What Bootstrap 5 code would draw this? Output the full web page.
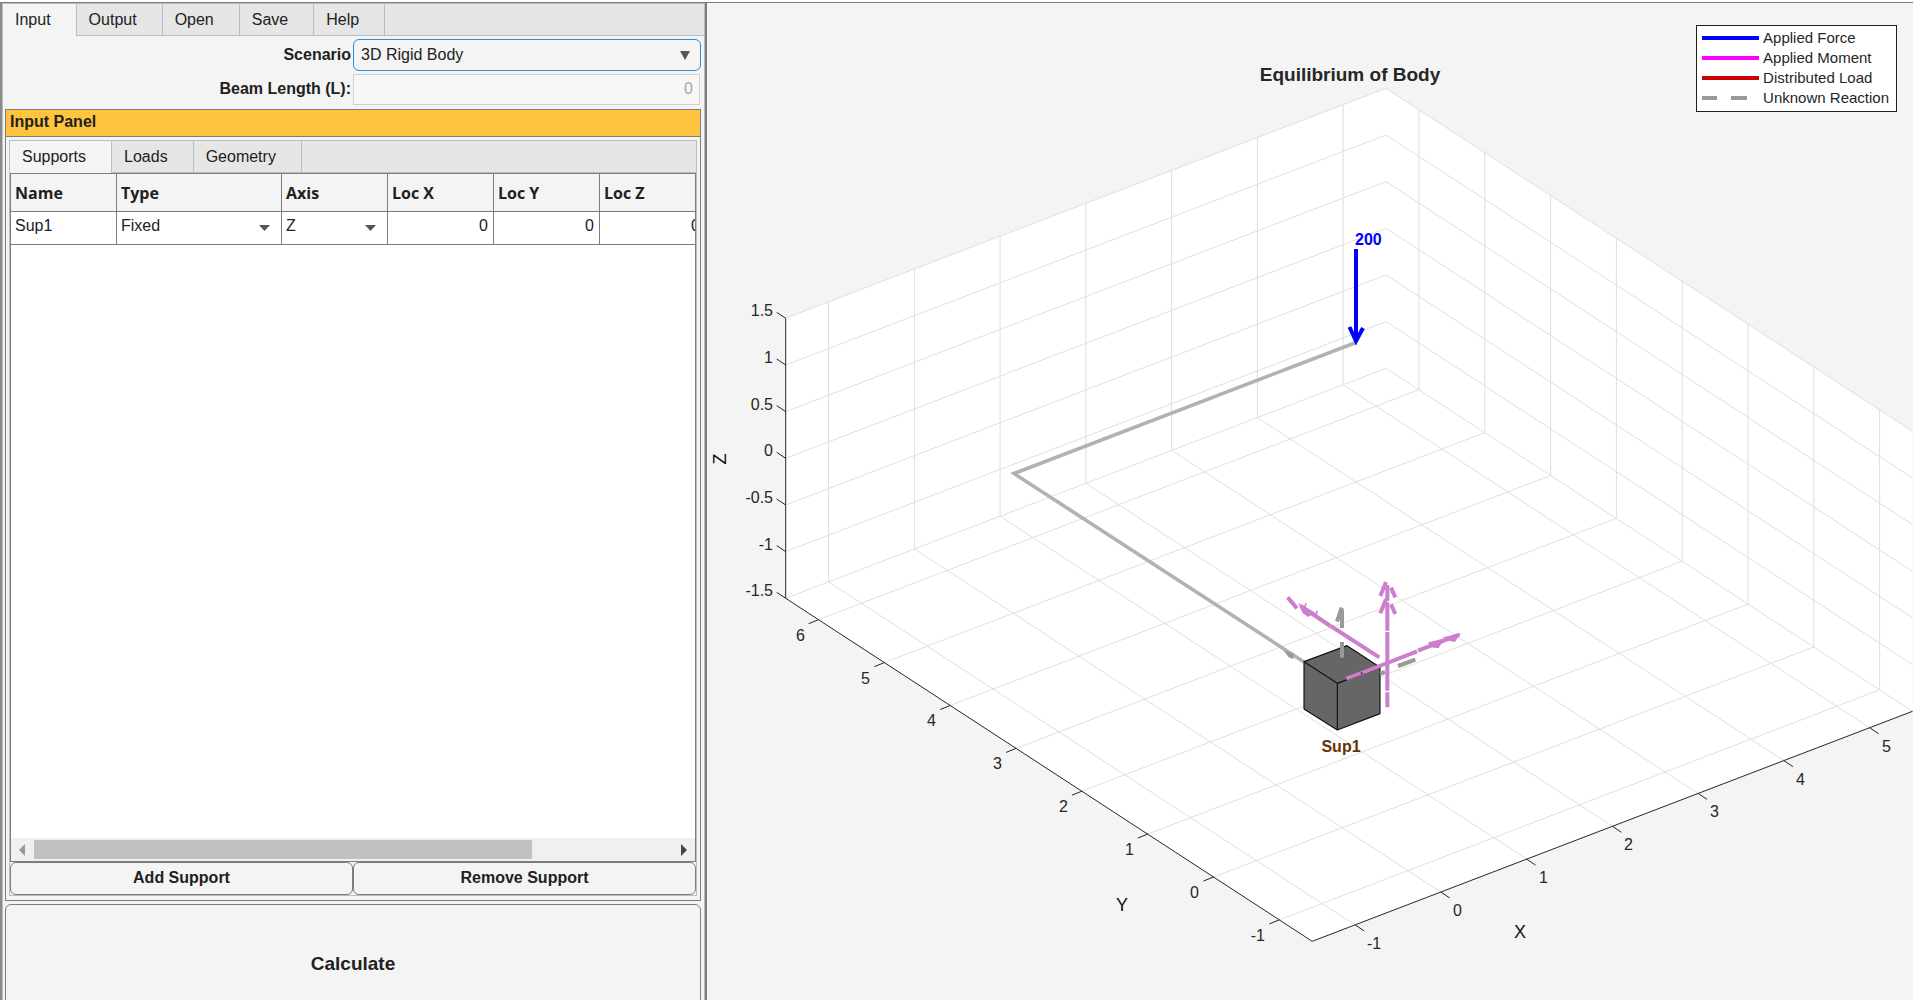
<!DOCTYPE html>
<html lang="en">
<head>
<meta charset="utf-8">
<meta name="viewport" content="width=device-width, initial-scale=1">
<title>Equilibrium of Body</title>
<link href="https://cdn.jsdelivr.net/npm/bootstrap@5.3.0/dist/css/bootstrap.min.css" rel="stylesheet">
<style>
  body { font-family: "Liberation Sans", Arial, sans-serif; font-size: 16px; line-height: 20px; color: #212121; background: #f4f4f4; }
  .app { height: 100vh; border-top: 1px solid #7d7d7d; box-shadow: 0 -2px #fff; margin-top: 2px; }
  .side { flex: 0 0 707px; min-width: 0; border-left: 2px solid #8a8a8a; border-right: 2px solid #7d7d7d; }
  .side-inner { border: 1px solid #bdbdbd; border-bottom: 0; }
  .tabstrip { background: #e6e6e6; height: 32px; box-shadow: inset 0 -1px #bdbdbd; }
  .tabstrip button { border: 0; border-right: 1px solid #bdbdbd; background: transparent; color: #212121; padding: 0 25px 0 12px; }
  .tabstrip button.active { background: #f4f4f4; }
  .form-area { padding: 3px 3px 0 2px; }
  .fld { height: 32px; width: 50%; }
  .fld-len { height: 31px; margin-top: 3px; }
  .scn { border: 1px solid #2a8ddb; border-radius: 6px; }
  .scn select, .cell-pick select { appearance: none; border: 0; background: transparent; color: #212121; outline: 0; padding: 0; }
  .scn select { padding-left: 7px; }
  .scn svg { margin-right: 10px; }
  .len { border: 1px solid #d0d0d0; background: #f7f7f7; color: #a6a6a6; text-align: right; padding: 0 6px 2px; margin-right: 1px; }
  .fld-label { width: 50%; padding-right: 2px; padding-bottom: 1px; }
  .inp-panel { border: 1px solid #7d7d7d; margin: 4px 3px 0 2px; }
  .inp-title { background: #ffc43d; border-bottom: 1px solid #7d7d7d; height: 27px; font-size: 16px; line-height: 24px; padding-left: 4px; margin: 0; }
  .inner { margin: 3px 3px 4px 3px; border: 1px solid #bdbdbd; }
  .grid-box { border: 1px solid #7d7d7d; background: #fff; overflow: hidden; height: 689px; }
  .grid-tbl { table-layout: fixed; width: 695px; border-collapse: separate; border-spacing: 0; }
  .grid-tbl th { height: 38px; background: #f4f4f4; font-family: "Open Sans", "Noto Sans", sans-serif; font-weight: 700; padding: 0 0 0 4px; border-right: 1px solid #7d7d7d; border-bottom: 1px solid #7d7d7d; }
  .grid-tbl td { height: 33px; vertical-align: top; padding: 4px 5px 0 4px; border-right: 1px solid #7d7d7d; border-bottom: 1px solid #7d7d7d; }
  .grid-tbl td.num { text-align: right; }
  .cell-pick svg { margin: 3px 6px 0 0; }
  .hbar { height: 23px; background: #f0f0f0; padding: 2px 8px; }
  .thumb { height: 19px; background: #c1c1c1; width: 498px; margin-left: 9px; }
  .act { border: 1px solid #7d7d7d; border-radius: 6px; background: #f4f4f4; font-weight: 700; color: #212121; }
  .act-sm { height: 33px; padding-bottom: 2px; }
  .act-lg { height: 120px; font-size: 19px; margin: 3px 3px 0 2px; }
  .plot-svg text { font-size: 16px; fill: #262626; }
  .plot-svg .axl { font-size: 18px; fill: #111; }
  .plot-svg .ttl { font-size: 19px; font-weight: 700; }
  .key { top: 22px; right: 16px; background: #fff; border: 1px solid #1f1f1f; padding: 2px 7px 3px 5px; font-size: 15px; color: #262626; }
</style>
<script src="https://cdn.jsdelivr.net/npm/bootstrap@5.3.0/dist/js/bootstrap.bundle.min.js"></script>
</head>
<body class="overflow-hidden">
<div class="app d-flex overflow-hidden">
  <aside class="side">
    <div class="side-inner d-flex flex-column">
      <nav class="tabstrip d-flex" aria-label="Main">
        <button type="button" class="active">Input</button><button type="button">Output</button><button type="button">Open</button><button type="button">Save</button><button type="button">Help</button>
      </nav>
      <form class="form-area">
        <div class="d-flex align-items-center">
          <label class="fld-label text-end fw-bold" for="scenario">Scenario</label>
          <div class="fld scn d-flex align-items-center">
            <select id="scenario" class="flex-fill"><option>3D Rigid Body</option></select>
            <svg width="10" height="9" aria-hidden="true"><path d="M0 0H10L5 9Z" fill="#555"/></svg>
          </div>
        </div>
        <div class="fld-len d-flex align-items-center">
          <label class="fld-label text-end fw-bold" for="blen">Beam Length (L):</label>
          <div class="w-50 h-100 d-flex"><input id="blen" class="len flex-fill" value="0" disabled></div>
        </div>
      </form>
      <section class="inp-panel">
        <h2 class="inp-title fw-bold">Input Panel</h2>
        <div class="inner">
          <nav class="tabstrip d-flex" aria-label="Input groups">
            <button type="button" class="active">Supports</button><button type="button">Loads</button><button type="button">Geometry</button>
          </nav>
          <div class="grid-box d-flex flex-column justify-content-between">
            <table class="grid-tbl">
              <colgroup><col style="width:106px"><col style="width:165px"><col style="width:106px"><col style="width:106px"><col style="width:106px"><col style="width:106px"></colgroup>
              <thead><tr><th>Name</th><th>Type</th><th>Axis</th><th>Loc X</th><th>Loc Y</th><th>Loc Z</th></tr></thead>
              <tbody><tr>
                <td>Sup1</td>
                <td><div class="cell-pick d-flex align-items-center"><select class="flex-fill" aria-label="Type"><option>Fixed</option></select><svg width="11" height="6" aria-hidden="true"><path d="M0 0H11L5.500 6Z" fill="#555"/></svg></div></td>
                <td><div class="cell-pick d-flex align-items-center"><select class="flex-fill" aria-label="Axis"><option>Z</option></select><svg width="11" height="6" aria-hidden="true"><path d="M0 0H11L5.500 6Z" fill="#555"/></svg></div></td>
                <td class="num">0</td><td class="num">0</td><td class="num">0</td>
              </tr></tbody>
            </table>
            <div class="hbar d-flex align-items-center">
              <svg width="6" height="12" aria-hidden="true"><path d="M6 0V12L0 6Z" fill="#999"/></svg>
              <div class="thumb"></div>
              <svg class="ms-auto" width="6" height="12" aria-hidden="true"><path d="M0 0V12L6 6Z" fill="#444"/></svg>
            </div>
          </div>
          <div class="d-flex">
            <button type="button" class="act act-sm w-50">Add Support</button>
            <button type="button" class="act act-sm w-50">Remove Support</button>
          </div>
        </div>
      </section>
      <button type="button" class="act act-lg">Calculate</button>
    </div>
  </aside>
  <main class="flex-fill position-relative overflow-hidden">
    <svg id="plot" class="plot-svg d-block w-100" viewBox="707 3 1206 997" role="img" aria-label="Equilibrium of Body">
      <g id="axes"></g>
      <text class="ttl" x="1350" y="81" text-anchor="middle">Equilibrium of Body</text>
      <text class="axl" x="1520" y="938" text-anchor="middle">X</text>
      <text class="axl" x="1122" y="911" text-anchor="middle">Y</text>
      <text class="axl" transform="translate(726 459) rotate(-90)" text-anchor="middle">Z</text>
      <path d="M1356 342.500L1014 473.500L1304 662" fill="none" stroke="#b2b2b2" stroke-width="3.600"/>
      <path d="M1356 249V340M1349.500 327L1356 341L1363 328" fill="none" stroke="#00f" stroke-width="4"/>
      <g transform="translate(1220 560) scale(.33333)" fill="none">
        <path d="M190 270L222 282L220 298L206 292Z" fill="#999"/>
        <g stroke="#111" stroke-width="3.500" fill="#666" stroke-linejoin="round">
          <path d="M252 305L381 257L480 322L480 461L352 510L252 447Z"/>
          <path d="M252 305L352 370L480 322M352 370V510" fill="none"/>
        </g>
        <path d="M366 293V246M366 204V148M365 143L351 185M534 318L586 299M480 341L495 336" stroke="#999" stroke-width="12"/>
        <g stroke="#cc7fcc" stroke-width="12">
          <path d="M502 75V122M502 127V212M502 216V392M502 397V442"/>
          <path d="M498 66L481 108M513 83L526 112M498 118L481 160M513 133L526 162"/>
          <path d="M379 356L424 339M425 339L591 274M594 272L718 224"/>
          <path d="M478 292L332 198M331 198L242 138M203 112L231 145"/>
          <path d="M627 249L670 238L655 262L640 261ZM674 233L718 222L704 244L692 242Z" stroke-width="4" fill="#cc7fcc"/>
          <path d="M240 135L280 158L265 168L250 158ZM254 142L258 130M289 164L291 152" stroke-width="5" fill="#cc7fcc"/>
        </g>
        <circle cx="425" cy="340" r="3" fill="#333"/>
      </g>
      <text x="1355" y="245" font-weight="700" style="fill:#00f">200</text>
      <text x="1341" y="752" font-weight="700" text-anchor="middle" style="fill:#663300">Sup1</text>
    </svg>
    <ul class="key position-absolute list-unstyled m-0">
      <li class="d-flex align-items-center"><svg class="me-1" width="57" height="20" aria-hidden="true"><path d="M0 10H57" stroke="#00f" stroke-width="4"/></svg>Applied Force</li>
      <li class="d-flex align-items-center"><svg class="me-1" width="57" height="20" aria-hidden="true"><path d="M0 10H57" stroke="#f0f" stroke-width="4"/></svg>Applied Moment</li>
      <li class="d-flex align-items-center"><svg class="me-1" width="57" height="20" aria-hidden="true"><path d="M0 10H57" stroke="#c00" stroke-width="4"/></svg>Distributed Load</li>
      <li class="d-flex align-items-center"><svg class="me-1" width="57" height="20" aria-hidden="true"><path d="M0 10H15M29 10H45" stroke="#999" stroke-width="4"/></svg>Unknown Reaction</li>
    </ul>
  </main>
</div>
<script>
  // Axes limits: x -1.5..5.5, y -1.5..6.5, z -1.5..1.5, parallel projection
  const P = (x, y, z) => [1312.2 + (x + 1.5) * 85.76 - (y + 1.5) * 65.81, 941.3 - (x + 1.5) * 32.86 - (y + 1.5) * 42.875 - (z + 1.5) * 93.33];
  const f = p => p.map(v => v.toFixed(1)).join(' ');
  const seg = (a, b) => 'M' + f(a) + 'L' + f(b);
  const face = pts => '<path fill="#fff" d="M' + pts.map(f).join('L') + 'Z"/>';
  let grid = '', ticks = '', labels = '';
  const label = (x, y, s, end) => { labels += `<text x="${Math.round(x)}" y="${Math.round(y)}"${end ? ' text-anchor="end"' : ''}>${s}</text>`; };
  for (let x = -1; x <= 5; x++) {
    grid += seg(P(x, -1.5, -1.5), P(x, 6.5, -1.5)) + seg(P(x, 6.5, -1.5), P(x, 6.5, 1.5));
    const [a, b] = P(x, -1.5, -1.5);
    ticks += seg([a, b], [a + 9, b + 6]);
    label(a + 12, b + 24, x);
  }
  for (let y = -1; y <= 6; y++) {
    grid += seg(P(-1.5, y, -1.5), P(5.5, y, -1.5)) + seg(P(5.5, y, -1.5), P(5.5, y, 1.5));
    const [a, b] = P(-1.5, y, -1.5);
    ticks += seg([a, b], [a - 10, b + 4]);
    label(a - 14, b + 21, y, true);
  }
  for (let z = -1.5; z <= 1.5; z += .5) {
    grid += seg(P(-1.5, 6.5, z), P(5.5, 6.5, z)) + seg(P(5.5, 6.5, z), P(5.5, -1.5, z));
    const [a, b] = P(-1.5, 6.5, z);
    ticks += seg([a, b], [a - 9, b - 6]);
    label(a - 13, b - 2, z, true);
  }
  const c = [P(-1.5, -1.5, -1.5), P(5.5, -1.5, -1.5), P(5.5, -1.5, 1.5), P(5.5, 6.5, 1.5), P(-1.5, 6.5, 1.5), P(-1.5, 6.5, -1.5)];
  ticks += seg(c[0], c[1]) + seg(c[0], c[5]) + seg(c[5], c[4]);
  document.getElementById('axes').innerHTML = face(c) +
    `<path d="${grid}" stroke="#dfdfdf" fill="none"/><path d="${ticks}" stroke="#262626" fill="none"/>` + labels;
</script>
</body>
</html>
